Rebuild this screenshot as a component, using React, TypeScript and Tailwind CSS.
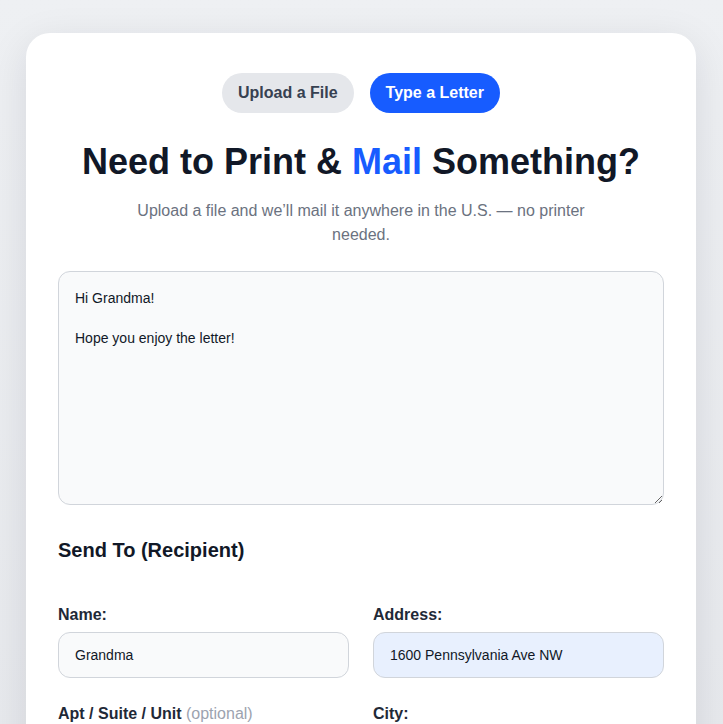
export default function App() {
  return (
    <div className="min-h-screen bg-gradient-to-b from-[#eef0f3] to-[#e6e8ec] pl-[26px] pt-[33px] pb-10 font-['Liberation_Sans',Arial,sans-serif]">
      <div className="w-[670px] rounded-3xl bg-white px-8 pt-10 pb-10 shadow-[0_10px_40px_rgba(15,23,42,0.10)]">
        <div className="flex justify-center gap-4">
          <button className="rounded-full bg-[#e5e7eb] px-4 py-2 text-base font-bold text-[#374151]">
            Upload a File
          </button>
          <button className="rounded-full bg-[#175cff] px-4 py-2 text-base font-bold text-white">
            Type a Letter
          </button>
        </div>

        <h1 className="mt-[29px] text-center text-4xl font-bold text-[#111827]">
          Need to Print &amp; <span className="text-[#175cff]">Mail</span> Something?
        </h1>
        <p className="mx-auto mt-[17px] max-w-[460px] text-center text-base leading-6 text-[#6b7280]">
          Upload a file and we’ll mail it anywhere in the U.S. — no printer needed.
        </p>

        <textarea
          className="mt-6 block h-[234px] w-full rounded-xl border border-[#d1d5db] bg-[#f9fafb] p-4 text-sm leading-5 text-[#111827] outline-none"
          defaultValue={"Hi Grandma!\n\nHope you enjoy the letter!"}
        />

        <h2 className="mt-[31px] text-xl font-bold text-[#111827]">Send To (Recipient)</h2>

        <div className="mt-[39px] grid grid-cols-2 gap-x-6 gap-y-6">
          <Field label="Name:" value="Grandma" />
          <Field label="Address:" value="1600 Pennsylvania Ave NW" autofill />
          <Field label="Apt / Suite / Unit" optional value="" />
          <Field label="City:" value="" />
        </div>
      </div>
    </div>
  );
}

function Field({
  label,
  value,
  optional,
  autofill,
}: {
  label: string;
  value: string;
  optional?: boolean;
  autofill?: boolean;
}) {
  return (
    <label className="block">
      <span className="mb-[5px] block text-base font-bold leading-6 text-[#1f2937]">
        {label}
        {optional && <span className="font-normal text-[#9ca3af]"> (optional)</span>}
      </span>
      <input
        className={`block h-[46px] w-full rounded-xl border border-[#d1d5db] px-4 text-sm text-[#111827] outline-none ${
          autofill ? "bg-[#e8f0fe]" : "bg-[#f9fafb]"
        }`}
        defaultValue={value}
      />
    </label>
  );
}
